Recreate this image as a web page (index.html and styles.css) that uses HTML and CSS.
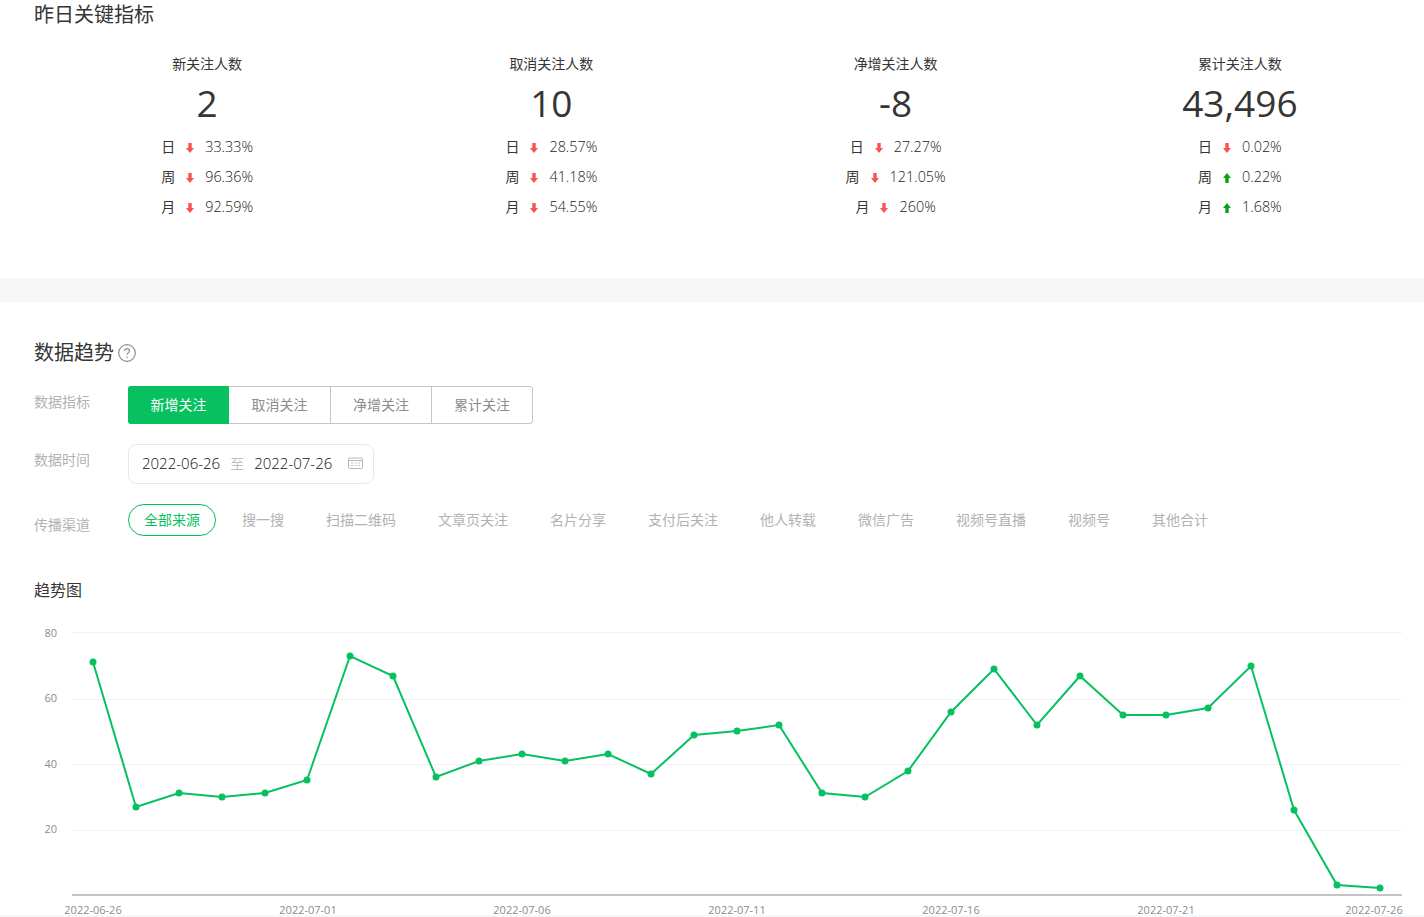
FILE: index.html
```html
<!DOCTYPE html>
<html lang="zh-CN">
<head>
    <meta charset="UTF-8">
    <title>数据趋势</title>
    <link rel="stylesheet" href="styles.css">
</head>
<body>

<section class="summary">
    <h2 class="summary-title">昨日关键指标</h2>
    <div class="summary-grid">
        <div class="metric">
            <div class="metric-name">新关注人数</div>
            <div class="metric-value">2</div>
            <div class="metric-row"><span>日</span><svg class="arrow down" viewBox="0 0 8 10"><path d="M2.3 0h3.4v5H8L4 10 0 5h2.3z"/></svg><span>33.33%</span></div>
            <div class="metric-row"><span>周</span><svg class="arrow down" viewBox="0 0 8 10"><path d="M2.3 0h3.4v5H8L4 10 0 5h2.3z"/></svg><span>96.36%</span></div>
            <div class="metric-row"><span>月</span><svg class="arrow down" viewBox="0 0 8 10"><path d="M2.3 0h3.4v5H8L4 10 0 5h2.3z"/></svg><span>92.59%</span></div>
        </div>
        <div class="metric">
            <div class="metric-name">取消关注人数</div>
            <div class="metric-value">10</div>
            <div class="metric-row"><span>日</span><svg class="arrow down" viewBox="0 0 8 10"><path d="M2.3 0h3.4v5H8L4 10 0 5h2.3z"/></svg><span>28.57%</span></div>
            <div class="metric-row"><span>周</span><svg class="arrow down" viewBox="0 0 8 10"><path d="M2.3 0h3.4v5H8L4 10 0 5h2.3z"/></svg><span>41.18%</span></div>
            <div class="metric-row"><span>月</span><svg class="arrow down" viewBox="0 0 8 10"><path d="M2.3 0h3.4v5H8L4 10 0 5h2.3z"/></svg><span>54.55%</span></div>
        </div>
        <div class="metric">
            <div class="metric-name">净增关注人数</div>
            <div class="metric-value">-8</div>
            <div class="metric-row"><span>日</span><svg class="arrow down" viewBox="0 0 8 10"><path d="M2.3 0h3.4v5H8L4 10 0 5h2.3z"/></svg><span>27.27%</span></div>
            <div class="metric-row"><span>周</span><svg class="arrow down" viewBox="0 0 8 10"><path d="M2.3 0h3.4v5H8L4 10 0 5h2.3z"/></svg><span>121.05%</span></div>
            <div class="metric-row"><span>月</span><svg class="arrow down" viewBox="0 0 8 10"><path d="M2.3 0h3.4v5H8L4 10 0 5h2.3z"/></svg><span>260%</span></div>
        </div>
        <div class="metric">
            <div class="metric-name">累计关注人数</div>
            <div class="metric-value">43,496</div>
            <div class="metric-row"><span>日</span><svg class="arrow down" viewBox="0 0 8 10"><path d="M2.3 0h3.4v5H8L4 10 0 5h2.3z"/></svg><span>0.02%</span></div>
            <div class="metric-row"><span>周</span><svg class="arrow up" viewBox="0 0 8 10"><path d="M4 0l4 5H5.7v5H2.3V5H0z"/></svg><span>0.22%</span></div>
            <div class="metric-row"><span>月</span><svg class="arrow up" viewBox="0 0 8 10"><path d="M4 0l4 5H5.7v5H2.3V5H0z"/></svg><span>1.68%</span></div>
        </div>
    </div>
</section>

<section class="trend">
    <div class="trend-head">
        <h2 class="trend-title">数据趋势</h2>
        <svg class="help-icon" viewBox="0 0 18 18">
            <circle cx="9" cy="9" r="8.3" fill="none" stroke="#8f8f8f" stroke-width="1.2"/>
            <path d="M6.6 7.1c0-1.500 1.100-2.400 2.500-2.400s2.400.9 2.400 2.100c0 1.900-2.500 1.900-2.500 4" fill="none" stroke="#8f8f8f" stroke-width="1.2"/>
            <circle cx="9" cy="13.3" r=".8" fill="#8f8f8f"/>
        </svg>
    </div>

    <div class="filter filter-metric">
        <div class="filter-label">数据指标</div>
        <div class="tabs">
            <div class="tab active">新增关注</div>
            <div class="tab">取消关注</div>
            <div class="tab">净增关注</div>
            <div class="tab">累计关注</div>
        </div>
    </div>

    <div class="filter filter-date">
        <div class="filter-label">数据时间</div>
        <div class="date-box">
            <span class="date">2022-06-26</span>
            <span class="date-sep">至</span>
            <span class="date">2022-07-26</span>
            <svg class="date-icon" viewBox="0 0 15 12">
                <rect x=".5" y="1" width="14" height="10.5" rx="1" fill="none" stroke="#b8b8b8"/>
                <path d="M1 3.5h13" stroke="#b8b8b8"/>
                <path d="M3 6h2M6.500 6h2M10 6h2M3 8.500h2M6.500 8.500h2M10 8.500h2" stroke="#c4c4c4"/>
            </svg>
        </div>
    </div>

    <div class="filter filter-channel">
        <div class="filter-label">传播渠道</div>
        <div class="chips">
            <span class="chip active">全部来源</span>
            <span class="chip">搜一搜</span>
            <span class="chip">扫描二维码</span>
            <span class="chip">文章页关注</span>
            <span class="chip">名片分享</span>
            <span class="chip">支付后关注</span>
            <span class="chip">他人转载</span>
            <span class="chip">微信广告</span>
            <span class="chip">视频号直播</span>
            <span class="chip">视频号</span>
            <span class="chip">其他合计</span>
        </div>
    </div>

    <h3 class="chart-title">趋势图</h3>

    <svg class="chart" viewBox="0 0 1424 301" width="1424" height="301">
        <g class="grid-lines">
            <path d="M72 16.5H1402"/>
            <path d="M72 83.5H1402"/>
            <path d="M72 148.5H1402"/>
            <path d="M72 214.5H1402"/>
        </g>
        <path class="baseline" d="M72 279H1402"/>
        <g class="y-labels">
            <text x="57" y="21">80</text>
            <text x="57" y="86">60</text>
            <text x="57" y="152">40</text>
            <text x="57" y="217">20</text>
        </g>
        <g class="x-labels">
            <text x="93" y="298">2022-06-26</text>
            <text x="308" y="298">2022-07-01</text>
            <text x="522" y="298">2022-07-06</text>
            <text x="737" y="298">2022-07-11</text>
            <text x="951" y="298">2022-07-16</text>
            <text x="1166" y="298">2022-07-21</text>
            <text x="1374" y="298">2022-07-26</text>
        </g>
        <polyline class="line" points="93,46 136,191 179,177 222,181 265,177 307,164 350,40 393,60 436,161 479,145 522,138 565,145 608,138 651,158 694,119 737,115 779,109 822,177 865,181 908,155 951,96 994,53 1037,109 1080,60 1123,99 1166,99 1208,92 1251,50 1294,194 1337,269 1380,272"/>
        <g class="dots">
            <circle cx="93" cy="46" r="3.5"/><circle cx="136" cy="191" r="3.5"/><circle cx="179" cy="177" r="3.5"/><circle cx="222" cy="181" r="3.5"/>
            <circle cx="265" cy="177" r="3.5"/><circle cx="307" cy="164" r="3.5"/><circle cx="350" cy="40" r="3.5"/><circle cx="393" cy="60" r="3.5"/>
            <circle cx="436" cy="161" r="3.5"/><circle cx="479" cy="145" r="3.5"/><circle cx="522" cy="138" r="3.5"/><circle cx="565" cy="145" r="3.5"/>
            <circle cx="608" cy="138" r="3.5"/><circle cx="651" cy="158" r="3.5"/><circle cx="694" cy="119" r="3.5"/><circle cx="737" cy="115" r="3.5"/>
            <circle cx="779" cy="109" r="3.5"/><circle cx="822" cy="177" r="3.5"/><circle cx="865" cy="181" r="3.5"/><circle cx="908" cy="155" r="3.5"/>
            <circle cx="951" cy="96" r="3.5"/><circle cx="994" cy="53" r="3.5"/><circle cx="1037" cy="109" r="3.5"/><circle cx="1080" cy="60" r="3.5"/>
            <circle cx="1123" cy="99" r="3.5"/><circle cx="1166" cy="99" r="3.5"/><circle cx="1208" cy="92" r="3.5"/><circle cx="1251" cy="50" r="3.5"/>
            <circle cx="1294" cy="194" r="3.5"/><circle cx="1337" cy="269" r="3.5"/><circle cx="1380" cy="272" r="3.5"/>
        </g>
    </svg>
</section>

</body>
</html>
```

FILE: styles.css
```css
html, body {
    margin: 0;
    padding: 0;
    height: 917px;
    overflow: hidden;
}

body {
    font-family: "Open Sans", "Noto Sans CJK SC", sans-serif;
    background-color: #f6f7f9;
    color: #353535;
}

.summary {
    background-color: #fff;
    height: 278px;
    padding: 1px 11px 0 34px;
    box-sizing: border-box;
}

.summary-title {
    margin: 0;
    font-size: 20px;
    font-weight: 400;
    line-height: 28px;
}

.summary-grid {
    display: grid;
    grid-template-columns: repeat(4, 1fr);
    margin: 25px 1px 0;
}

.metric {
    text-align: center;
}

.metric-name {
    font-size: 14px;
    line-height: 20px;
}

.metric-value {
    font-size: 37px;
    line-height: 40px;
    margin: 9px 0 9px;
}

.metric-row {
    display: flex;
    justify-content: center;
    align-items: center;
    gap: 11px;
    font-size: 14px;
    line-height: 30px;
}

.metric-row span:last-child {
    font-size: 14.4px;
    font-weight: 300;
    color: #222;
}

.arrow {
    width: 8px;
    height: 10px;
    margin-top: 2px;
}

.arrow.down {
    fill: #fa5151;
}

.arrow.up {
    fill: #0e9f1c;
}

.trend {
    background-color: #fff;
    margin-top: 24px;
    height: 613px;
    padding-top: 37px;
    box-sizing: border-box;
}

.trend-head {
    display: flex;
    align-items: center;
    gap: 4px;
    padding-left: 34px;
    height: 28px;
}

.trend-title {
    margin: 0;
    font-size: 20px;
    font-weight: 400;
    line-height: 28px;
}

.help-icon {
    width: 18px;
    height: 18px;
}

.filter {
    display: flex;
    padding-left: 34px;
}

.filter-label {
    width: 94px;
    font-size: 14px;
    color: #b2b2b2;
    line-height: 20px;
}

.filter-metric {
    margin-top: 19px;
}

.filter-metric .filter-label {
    margin-top: 6px;
}

.tabs {
    display: flex;
    width: 405px;
    height: 38px;
    border: 1px solid #c6c6c6;
    border-radius: 3px;
    box-sizing: border-box;
}

.tab {
    width: 101px;
    box-sizing: border-box;
    border-right: 1px solid #c6c6c6;
    text-align: center;
    font-size: 14px;
    line-height: 36px;
    color: #8c8c8c;
}

.tab:nth-child(2) {
    width: 102px;
}

.tab:last-child {
    border-right: none;
    width: 100px;
}

.tab.active {
    margin: -1px 0 -1px -1px;
    height: 38px;
    background-color: #07c160;
    border-right: none;
    border-radius: 3px 0 0 3px;
    color: #fff;
    line-height: 38px;
}

.filter-date {
    margin-top: 20px;
}

.filter-date .filter-label {
    margin-top: 6px;
}

.date-box {
    display: flex;
    align-items: center;
    width: 246px;
    height: 40px;
    box-sizing: border-box;
    border: 1px solid #e7e7eb;
    border-radius: 8px;
    padding: 0 10px 2px 13px;
    font-size: 15px;
    font-weight: 300;
    color: #111;
}

.date-sep {
    color: #b2b2b2;
    font-size: 14px;
    margin: 0 10px;
}

.date-icon {
    width: 15px;
    height: 12px;
    margin-left: auto;
}

.filter-channel {
    margin-top: 20px;
}

.filter-channel .filter-label {
    margin-top: 11px;
}

.chips {
    display: flex;
    gap: 10px;
}

.chip {
    padding: 0 16px;
    font-size: 14px;
    line-height: 32px;
    color: #b2b2b2;
}

.chip.active {
    padding: 0 15px;
    border: 1px solid #07c160;
    border-radius: 16px;
    color: #07c160;
    line-height: 30px;
}

.chart-title {
    margin: 0;
    padding: 43px 0 0 34px;
    font-size: 16px;
    font-weight: 400;
    line-height: 22px;
}

.chart {
    display: block;
    margin-top: 15px;
}

.grid-lines path {
    stroke: #f2f2f2;
    stroke-width: 1;
}

.baseline {
    stroke: #c4c4c4;
    stroke-width: 2;
}

.chart text {
    font-family: "Open Sans", sans-serif;
    fill: #8c8c8c;
}

.y-labels text {
    font-size: 11px;
    text-anchor: end;
}

.x-labels text {
    font-size: 11px;
    text-anchor: middle;
}

.line {
    fill: none;
    stroke: #07c160;
    stroke-width: 2;
}

.dots circle {
    fill: #07c160;
}
```
